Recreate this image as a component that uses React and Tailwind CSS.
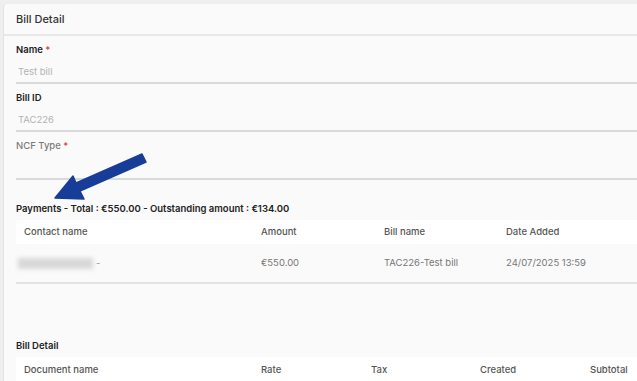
const font = "font-['Inter','Noto_Sans',sans-serif]"

function Field({ label, value, required, muted }) {
  return (
    <div className="pt-[7px] pb-[3px] border-b-2 border-[#d9d9d9]">
      <div className={`h-[14px] leading-[14px] text-[9.5px] ${muted ? 'font-medium text-[#7a7a7a]' : 'font-semibold text-[#222]'}`}>
        {label}
        {required && <span className="text-[#d83a3a]"> *</span>}
      </div>
      <div className="mt-[8px] h-[14px] leading-[14px] text-[9.5px] text-[#b3b3b3] pl-[2px]">{value}</div>
    </div>
  )
}

function Arrow() {
  return (
    <svg className="absolute left-0 top-0" width="160" height="210" viewBox="0 0 160 210">
      <polygon
        points="55,198 73,176 76,183 142,154 146,162 80,191 84,199"
        fill="#183d98"
        stroke="#183d98"
        strokeWidth="1.5"
        strokeLinejoin="round"
      />
    </svg>
  )
}

export default function App() {
  return (
    <div className={`relative w-[637px] h-[381px] overflow-hidden bg-[#efefef] pt-[4px] pl-[3px] ${font}`}>
      <div className="h-full bg-[#fafafa] border-l border-[#e3e3e3] rounded-tl-[4px]">
        <div className="h-[32px] flex items-center pl-[12px] border-b-2 border-[#e8e8e8] text-[11px] font-medium text-[#333]">
          Bill Detail
        </div>

        <div className="pl-[12px]">
          <Field label="Name" value="Test bill" required />
          <Field label="Bill ID" value="TAC226" />
          <Field label="NCF Type" value="" required muted />

          <div className="mt-[22px] h-[14px] leading-[14px] text-[9.5px] font-semibold text-[#222]">
            Payments - Total : €550.00 - Outstanding amount : €134.00
          </div>

          <div className="mt-[4px]">
            <div className="h-[24px] bg-white grid grid-cols-[237px_123px_122px_1fr] pl-[8px] items-center text-[9.5px] font-medium text-[#555]">
              <div>Contact name</div>
              <div>Amount</div>
              <div>Bill name</div>
              <div>Date Added</div>
            </div>
            <div className="h-[40px] grid grid-cols-[237px_123px_122px_1fr] pl-[2px] items-center text-[9.5px] text-[#777] border-b-2 border-[#e3e3e3]">
              <div className="flex items-center">
                <span className="inline-block w-[75px] h-[11px] bg-[#d8d8d8] blur-[2px]" />
                <span className="ml-[3px] text-[#999]">-</span>
              </div>
              <div className="pl-[6px]">€550.00</div>
              <div className="pl-[6px]">TAC226-Test bill</div>
              <div className="pl-[6px]">24/07/2025 13:59</div>
            </div>
          </div>

          <div className="mt-[55px] h-[14px] leading-[14px] text-[9.5px] font-semibold text-[#222]">Bill Detail</div>

          <div className="mt-[4px] h-[26px] bg-white grid grid-cols-[237px_110px_109px_110px_1fr] pl-[8px] items-center text-[9.5px] font-medium text-[#555]">
            <div>Document name</div>
            <div>Rate</div>
            <div>Tax</div>
            <div>Created</div>
            <div>Subtotal</div>
          </div>
        </div>
      </div>
      <Arrow />
    </div>
  )
}
